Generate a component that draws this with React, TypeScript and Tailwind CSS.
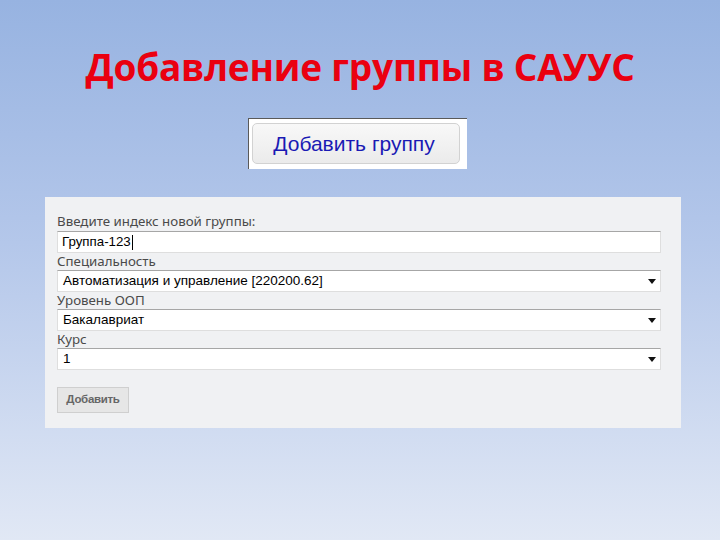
export default function App() {
  const fields = [
    { label: "Специальность", value: "Автоматизация и управление [220200.62]" },
    { label: "Уровень ООП", value: "Бакалавриат" },
    { label: "Курс", value: "1" },
  ];

  return (
    <div className="h-[540px] w-[720px] overflow-hidden bg-[linear-gradient(180deg,#97b3e1_0%,#b4c7ea_45%,#e1e8f5_100%)]">
      <h1 className="pt-[39px] text-center font-['Open_Sans',sans-serif] text-[37px] font-bold leading-[56px] tracking-[-0.2px] text-[#ea0010]">
        Добавление группы в САУУС
      </h1>

      <div className="ml-[248px] mt-[23px] h-[51px] w-[219px] border-l border-t border-[#5a5a5a] bg-white pl-[3px] pt-[4px]">
        <div className="flex h-[41px] w-[208px] items-center justify-center rounded-[5px] border border-[#d2d2d2] bg-[linear-gradient(180deg,#f8f8f8,#ebebeb)] pr-[4px] font-['Liberation_Sans',sans-serif] text-[21px] text-[#1a1ab4]">
          Добавить группу
        </div>
      </div>

      <div className="ml-[45px] mt-[28px] h-[231px] w-[636px] bg-[#f0f1f3] pl-[12px] pr-[20px] pt-[15px]">
        <div className="font-['Noto_Sans',sans-serif] text-[13.3px] leading-[19px] text-[#4a4a4a]">
          Введите индекс новой группы:
        </div>
        <div className="flex h-[22px] items-center border border-[#dedede] border-t-[#a6a6a6] bg-white pl-[4px] font-['Liberation_Sans',sans-serif] text-[13.3px] text-black">
          Группа-123<span className="ml-[1px] inline-block h-[15px] w-px bg-black" />
        </div>

        {fields.map((f) => (
          <div key={f.label}>
            <div className="font-['Noto_Sans',sans-serif] text-[13.3px] leading-[17px] text-[#4a4a4a]">
              {f.label}
            </div>
            <div className="flex h-[22px] items-center justify-between border border-[#dedede] border-t-[#a6a6a6] bg-white pl-[5px] pr-[4px] font-['Liberation_Sans',sans-serif] text-[13.5px] text-black">
              <span>{f.value}</span>
              <svg width="8" height="5" viewBox="0 0 8 5">
                <polygon points="0,0 8,0 4,5" fill="#111" />
              </svg>
            </div>
          </div>
        ))}

        <div className="mt-[17px] flex h-[26px] w-[72px] items-center justify-center border border-[#cfcfcf] bg-[#e6e6e6] font-['Liberation_Sans',sans-serif] text-[11.5px] font-bold tracking-[-0.3px] text-[#666]">
          Добавить
        </div>
      </div>
    </div>
  );
}
